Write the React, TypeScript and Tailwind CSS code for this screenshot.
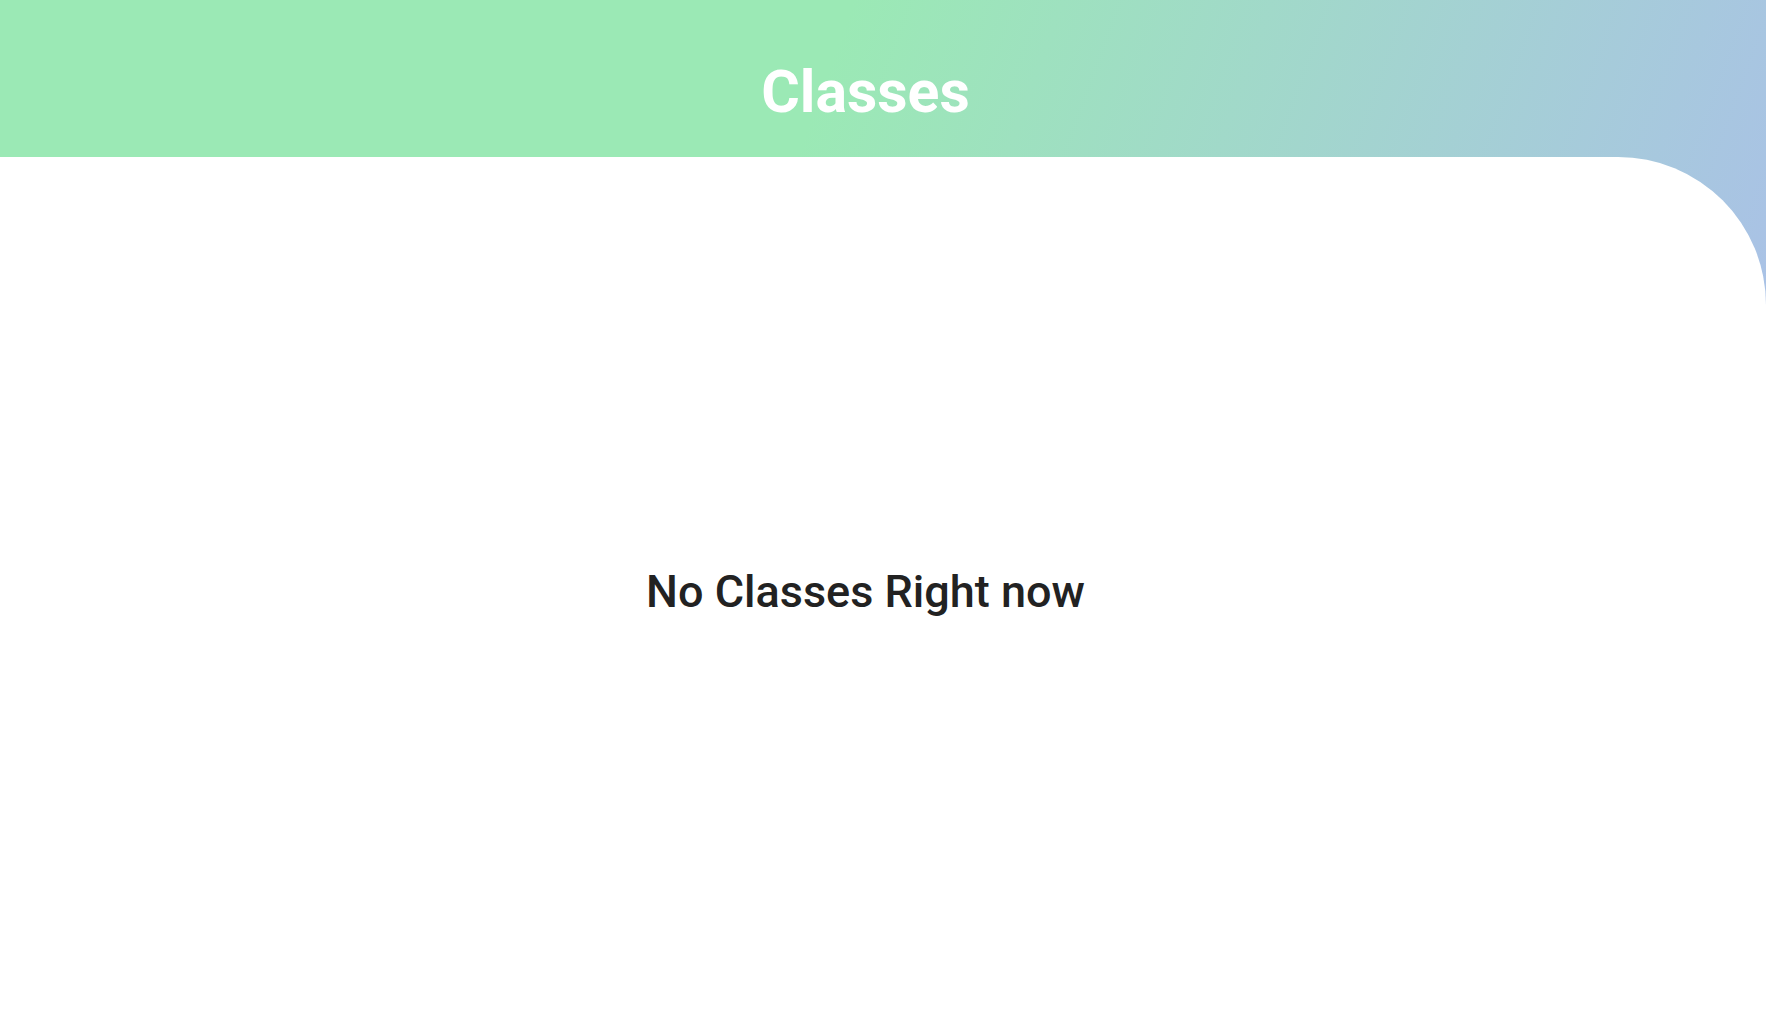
export default function App() {
  return (
    <div
      className="h-[1010px] w-full flex flex-col bg-[linear-gradient(110deg,#9be9b5_40%,#adb8f2_100%)]"
      style={{ fontFamily: "Roboto, 'Noto Sans', sans-serif" }}
    >
      {/* Header */}
      <header className="h-[157px] shrink-0 flex items-center justify-center pr-[35px] pt-[25px]">
        <h1 className="text-[59px] font-bold text-white leading-none">Classes</h1>
      </header>

      {/* Content */}
      <main className="flex-1 bg-white rounded-tr-[148px] flex items-center justify-center pr-[35px] pt-[16px]">
        <p className="text-[45px] font-medium text-[#222222] leading-none">No Classes Right now</p>
      </main>
    </div>
  );
}
